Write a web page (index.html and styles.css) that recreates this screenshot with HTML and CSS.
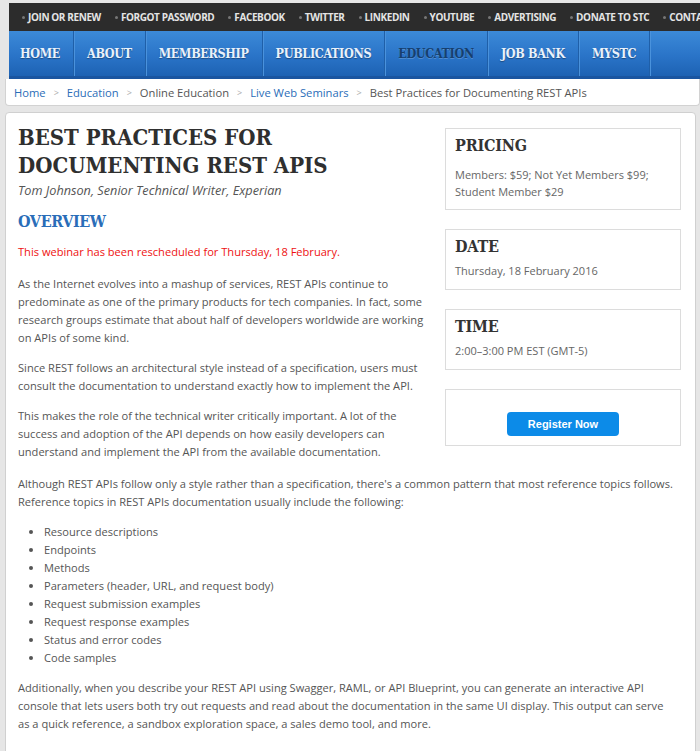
FILE: index.html
```html
<!DOCTYPE html>
<html>
<head>
<meta charset="utf-8">
<link rel="stylesheet" href="styles.css">
</head>
<body>
<div class="frame">
  <header class="header">
    <ul class="topbar">
      <li>JOIN OR RENEW</li>
      <li>FORGOT PASSWORD</li>
      <li>FACEBOOK</li>
      <li>TWITTER</li>
      <li>LINKEDIN</li>
      <li>YOUTUBE</li>
      <li>ADVERTISING</li>
      <li>DONATE TO STC</li>
      <li>CONTACT</li>
    </ul>
    <nav class="mainnav">
      <a class="nav-item">HOME</a>
      <a class="nav-item">ABOUT</a>
      <a class="nav-item">MEMBERSHIP</a>
      <a class="nav-item">PUBLICATIONS</a>
      <a class="nav-item active">EDUCATION</a>
      <a class="nav-item">JOB BANK</a>
      <a class="nav-item">MYSTC</a>
      <span class="nav-rest"></span>
    </nav>
  </header>
  <div class="breadcrumb">
    <a>Home</a><span class="sep">&gt;</span>
    <a>Education</a><span class="sep">&gt;</span>
    <span class="plain">Online Education</span><span class="sep">&gt;</span>
    <a>Live Web Seminars</a><span class="sep">&gt;</span>
    <span class="plain">Best Practices for Documenting REST APIs</span>
  </div>
  <main class="content">
    <div class="top-grid">
      <div class="main-col">
        <h1 class="title">BEST PRACTICES FOR<br>DOCUMENTING REST APIS</h1>
        <p class="author">Tom Johnson, Senior Technical Writer, Experian</p>
        <h2 class="overview">OVERVIEW</h2>
        <p class="alert">This webinar has been rescheduled for Thursday, 18 February.</p>
        <p>As the Internet evolves into a mashup of services, REST APIs continue to predominate as one of the primary products for tech companies. In fact, some research groups estimate that about half of developers worldwide are working on APIs of some kind.</p>
        <p>Since REST follows an architectural style instead of a specification, users must consult the documentation to understand exactly how to implement the API.</p>
        <p>This makes the role of the technical writer critically important. A lot of the success and adoption of the API depends on how easily developers can understand and implement the API from the available documentation.</p>
      </div>
      <aside class="sidebar">
        <div class="box box-pricing">
          <h3>PRICING</h3>
          <p>Members: $59; Not Yet Members $99; Student Member $29</p>
        </div>
        <div class="box">
          <h3>DATE</h3>
          <p>Thursday, 18 February 2016</p>
        </div>
        <div class="box">
          <h3>TIME</h3>
          <p>2:00–3:00 PM EST (GMT-5)</p>
        </div>
        <div class="box register">
          <a class="btn">Register Now</a>
        </div>
      </aside>
    </div>
    <div class="full">
      <p>Although REST APIs follow only a style rather than a specification, there's a common pattern that most reference topics follows. Reference topics in REST APIs documentation usually include the following:</p>
      <ul class="list">
        <li>Resource descriptions</li>
        <li>Endpoints</li>
        <li>Methods</li>
        <li>Parameters (header, URL, and request body)</li>
        <li>Request submission examples</li>
        <li>Request response examples</li>
        <li>Status and error codes</li>
        <li>Code samples</li>
      </ul>
      <p>Additionally, when you describe your REST API using Swagger, RAML, or API Blueprint, you can generate an interactive API console that lets users both try out requests and read about the documentation in the same UI display. This output can serve as a quick reference, a sandbox exploration space, a sales demo tool, and more.</p>
    </div>
  </main>
</div>
</body>
</html>
```
FILE: styles.css
```css
html, body {
  margin: 0;
  padding: 0;
}
body {
  background: #e6e6e6;
  width: 700px;
  height: 751px;
  overflow: hidden;
  font-family: "Open Sans", "DejaVu Sans", sans-serif;
}
.frame {
  padding-top: 3px;
}
.header {
  margin-left: 9px;
  width: 760px;
}
.topbar {
  list-style: none;
  margin: 0;
  padding: 0 0 0 13px;
  height: 28px;
  background: #2c2c2c;
  display: flex;
  align-items: center;
  gap: 14px;
  white-space: nowrap;
}
.topbar li {
  display: flex;
  align-items: center;
  gap: 3px;
  color: #e4e4e4;
  font-size: 10px;
  font-weight: 700;
  letter-spacing: -0.4px;
}
.topbar li::before {
  content: "";
  width: 3px;
  height: 3px;
  border-radius: 50%;
  background: #777;
}
.mainnav {
  display: flex;
  height: 45px;
  background: linear-gradient(#3c8ad8, #2a74c8 55%, #1d62b3);
  border-bottom: 3px solid #1a55a0;
}
.nav-item {
  display: flex;
  align-items: center;
  padding: 0 13px;
  border-right: 1px solid #1f5fa8;
  box-shadow: 1px 0 0 #4a92dc;
  font-family: "DejaVu Serif", serif;
  font-stretch: condensed;
  font-weight: 700;
  font-size: 12.5px;
  letter-spacing: -0.35px;
  color: #eaf2fb;
  text-shadow: 0 1px 1px rgba(0,0,0,0.35);
}
.nav-item:first-child {
  padding-left: 11px;
}
.nav-item.active {
  color: #163f6e;
  text-shadow: 0 1px 0 rgba(255,255,255,0.2);
}
.nav-rest {
  flex: 1;
}
.breadcrumb {
  margin-left: 5px;
  height: 26px;
  background: #fff;
  border: 1px solid #d2d2d2;
  border-top: none;
  border-radius: 0 0 4px 4px;
  display: flex;
  align-items: center;
  padding-left: 8px;
  font-size: 11.2px;
  color: #555;
  white-space: nowrap;
}
.breadcrumb a {
  color: #2a6db8;
}
.breadcrumb .sep {
  color: #aaa;
  font-size: 9px;
  margin: 0 8px;
}
.content {
  margin: 6px 4px 0 5px;
  background: #fff;
  border: 1px solid #d0d0d0;
  border-radius: 4px;
  padding: 10px 14px 20px 12px;
  font-size: 11.1px;
  line-height: 18px;
  color: #555;
}
.top-grid {
  display: grid;
  grid-template-columns: 1fr 236px;
  column-gap: 10px;
}
.main-col p, .full p {
  margin: 0 0 12px;
}
.title {
  margin: 0;
  font-family: "DejaVu Serif", serif;
  font-stretch: condensed;
  font-weight: 700;
  font-size: 22px;
  line-height: 28px;
  color: #2f2f2f;
}
.main-col .author {
  font-style: italic;
  font-size: 12.7px;
  color: #555;
  margin: 2px 0 12px;
}
.overview {
  margin: 0 0 10px;
  font-family: "DejaVu Serif", serif;
  font-stretch: condensed;
  font-weight: 700;
  font-size: 16px;
  letter-spacing: -0.4px;
  line-height: 22px;
  color: #2a6db8;
}
.main-col .alert {
  color: #ee1111;
  margin-bottom: 14px;
}
.sidebar {
  padding-top: 5px;
  display: flex;
  flex-direction: column;
  gap: 19px;
}
.box {
  border: 1px solid #dcdcdc;
  padding: 6px 9px 9px;
}
.box h3 {
  margin: 0;
  font-family: "DejaVu Serif", serif;
  font-stretch: condensed;
  font-weight: 700;
  font-size: 16px;
  letter-spacing: -0.2px;
  line-height: 22px;
  color: #333;
}
.box p {
  margin: 4px 0 0;
  font-size: 11px;
  line-height: 18px;
  color: #666;
}
.box-pricing p {
  margin-top: 9px;
  line-height: 17px;
}
.box.register {
  height: 57px;
  box-sizing: border-box;
  display: flex;
  justify-content: center;
  align-items: flex-end;
  padding: 0 0 9px;
}
.btn {
  display: block;
  width: 112px;
  height: 24px;
  line-height: 24px;
  text-align: center;
  background: #0c8be8;
  border-radius: 4px;
  color: #fff;
  font-family: "Liberation Sans", Arial, sans-serif;
  font-weight: 700;
  font-size: 11px;
}
.full {
  margin: 2px 5px 0 0;
}
.list {
  margin: 0 0 12px;
  padding-left: 26px;
}
```
